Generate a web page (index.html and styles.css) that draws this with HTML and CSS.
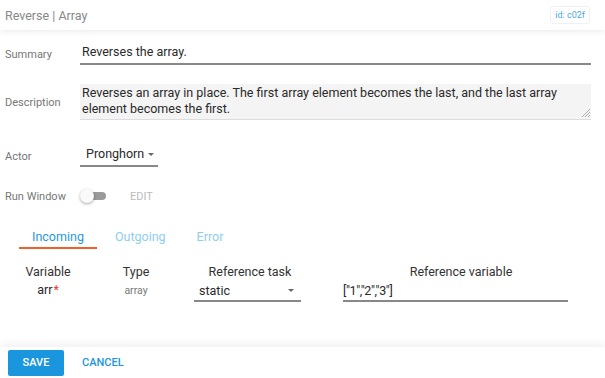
FILE: index.html
```html
<!DOCTYPE html>
<html lang="en">
<head>
  <meta charset="UTF-8">
  <meta name="viewport" content="width=device-width, initial-scale=1.0">
  <title>Reverse | Array</title>
  <link rel="stylesheet" href="styles.css">
</head>
<body>
  <header class="topbar">
    <span class="title">Reverse | Array</span>
    <span class="task-id">id: c02f</span>
  </header>

  <main class="form">
    <div class="row row-summary">
      <label class="label">Summary</label>
      <div class="field line">Reverses the array.</div>
    </div>

    <div class="row row-desc">
      <label class="label">Description</label>
      <div class="field area">
        Reverses an array in place. The first array element becomes the last, and the last array element becomes the first.
        <svg class="grip" width="9" height="9" viewBox="0 0 9 9">
          <path d="M9 1L1 9M9 4L4 9M9 7L7 9" stroke="#999" stroke-width="0.8"/>
        </svg>
      </div>
    </div>

    <div class="row row-actor">
      <label class="label">Actor</label>
      <div class="field select">
        Pronghorn <span class="caret"></span>
      </div>
    </div>

    <div class="row row-run">
      <label class="label">Run Window</label>
      <div class="run">
        <span class="toggle"><span class="knob"></span></span>
        <span class="edit">EDIT</span>
      </div>
    </div>

    <div class="tabs">
      <div class="tab active">Incoming</div>
      <div class="tab">Outgoing</div>
      <div class="tab">Error</div>
    </div>

    <div class="vars">
      <div class="th">Variable</div>
      <div class="th">Type</div>
      <div class="th">Reference task</div>
      <div class="th">Reference variable</div>

      <div class="td">arr<span class="req">*</span></div>
      <div class="td type">array</div>
      <div class="td"><div class="ref-select">static <span class="caret"></span></div></div>
      <div class="td"><div class="ref-input">["1","2","3"]</div></div>
    </div>
  </main>

  <footer class="actions">
    <button class="save">SAVE</button>
    <button class="cancel">CANCEL</button>
  </footer>
</body>
</html>
```

FILE: styles.css
```css
* {
  box-sizing: border-box;
}
body {
  margin: 0;
  height: 378px;
  display: flex;
  flex-direction: column;
  font-family: Roboto, "Liberation Sans", sans-serif;
  color: #333;
  background: #fff;
  overflow: hidden;
}
.topbar {
  height: 30px;
  display: flex;
  align-items: center;
  justify-content: space-between;
  padding: 0 6px 0 5px;
  box-shadow: 0 2px 6px rgba(0, 0, 0, 0.07);
  position: relative;
}
.title {
  font-size: 12.5px;
  color: #888;
}
.task-id {
  font-size: 9px;
  color: #4aa8e8;
  border: 1px solid #eef2f5;
  border-radius: 3px;
  padding: 3px 4px;
  margin-right: 9px;
}
.form {
  flex: 1;
  padding: 13px 14px 0 0;
}
.row {
  display: grid;
  grid-template-columns: 80px 1fr;
  align-items: center;
}
.label {
  font-size: 11px;
  color: #777;
  padding-left: 5px;
}
.field {
  font-size: 12.5px;
  color: #2a2a2a;
}
.line {
  height: 22px;
  padding: 1px 2px 0;
  border-bottom: 2px solid #888;
}
.row-desc {
  margin-top: 19px;
}
.area {
  position: relative;
  height: 36px;
  padding: 1px 18px 0 2px;
  line-height: 16px;
  background: #f4f4f4;
  border-bottom: 1px solid #ddd;
}
.grip {
  position: absolute;
  right: 1px;
  bottom: 2px;
}
.row-actor {
  margin-top: 26px;
}
.select {
  width: 78px;
  height: 21px;
  padding: 0 0 0 6px;
  border-bottom: 2px solid #888;
}
.caret {
  display: inline-block;
  width: 0;
  height: 0;
  border-left: 3.5px solid transparent;
  border-right: 3.5px solid transparent;
  border-top: 3.5px solid #666;
  vertical-align: middle;
  margin-left: 1px;
}
.row-run {
  margin-top: 22px;
}
.run {
  display: flex;
  align-items: center;
}
.toggle {
  position: relative;
  width: 26px;
  height: 14px;
  display: inline-block;
}
.toggle::before {
  content: "";
  position: absolute;
  left: 4px;
  right: 0;
  top: 3px;
  height: 8px;
  border-radius: 4px;
  background: #9a9a9a;
}
.knob {
  position: absolute;
  left: 0;
  top: 0;
  width: 14px;
  height: 14px;
  border-radius: 50%;
  background: #fafafa;
  box-shadow: 0 1px 3px rgba(0, 0, 0, 0.35);
}
.edit {
  font-size: 11px;
  color: #bbb;
  margin-left: 24px;
}
.tabs {
  display: flex;
  gap: 5px;
  margin: 22px 0 0 19px;
}
.tab {
  padding: 4px 13px 3px;
  font-size: 12.5px;
  color: #8fcdf0;
  border-bottom: 2px solid transparent;
}
.tab.active {
  color: #2a97de;
  border-bottom-color: #f0602a;
}
.vars {
  display: grid;
  grid-template-columns: 70px 106px 133px 278px;
  margin: 15px 0 0 13px;
  row-gap: 3px;
}
.th {
  text-align: center;
  font-size: 12.5px;
  color: #333;
}
.th:nth-child(3) {
  padding-right: 11px;
}
.td {
  text-align: center;
  font-size: 12.5px;
  color: #2a2a2a;
}
.type {
  font-size: 10.5px;
  color: #777;
  padding-top: 2px;
}
.req {
  color: #e53935;
  margin-left: 1px;
}
.ref-select {
  width: 107px;
  margin-left: 5px;
  height: 20px;
  display: flex;
  justify-content: space-between;
  align-items: center;
  padding: 0 7px 2px 5px;
  border-bottom: 2px solid #888;
  text-align: left;
}
.ref-input {
  width: 225px;
  margin-left: 21px;
  height: 20px;
  padding: 1px 0 0;
  border-bottom: 2px solid #888;
  text-align: left;
  letter-spacing: -0.4px;
}
.actions {
  height: 31px;
  display: flex;
  align-items: center;
  gap: 18px;
  padding: 0 8px;
  background: #fff;
  box-shadow: 0 -3px 8px rgba(0, 0, 0, 0.06);
  position: relative;
}
button {
  font-family: Roboto, "Liberation Sans", sans-serif;
  font-size: 11px;
  font-weight: 500;
  border: none;
  cursor: pointer;
}
.save {
  width: 56px;
  height: 26px;
  background: #1a96de;
  color: #fff;
  border-radius: 2px;
}
.cancel {
  background: none;
  color: #1a96de;
  padding: 0;
}
```
